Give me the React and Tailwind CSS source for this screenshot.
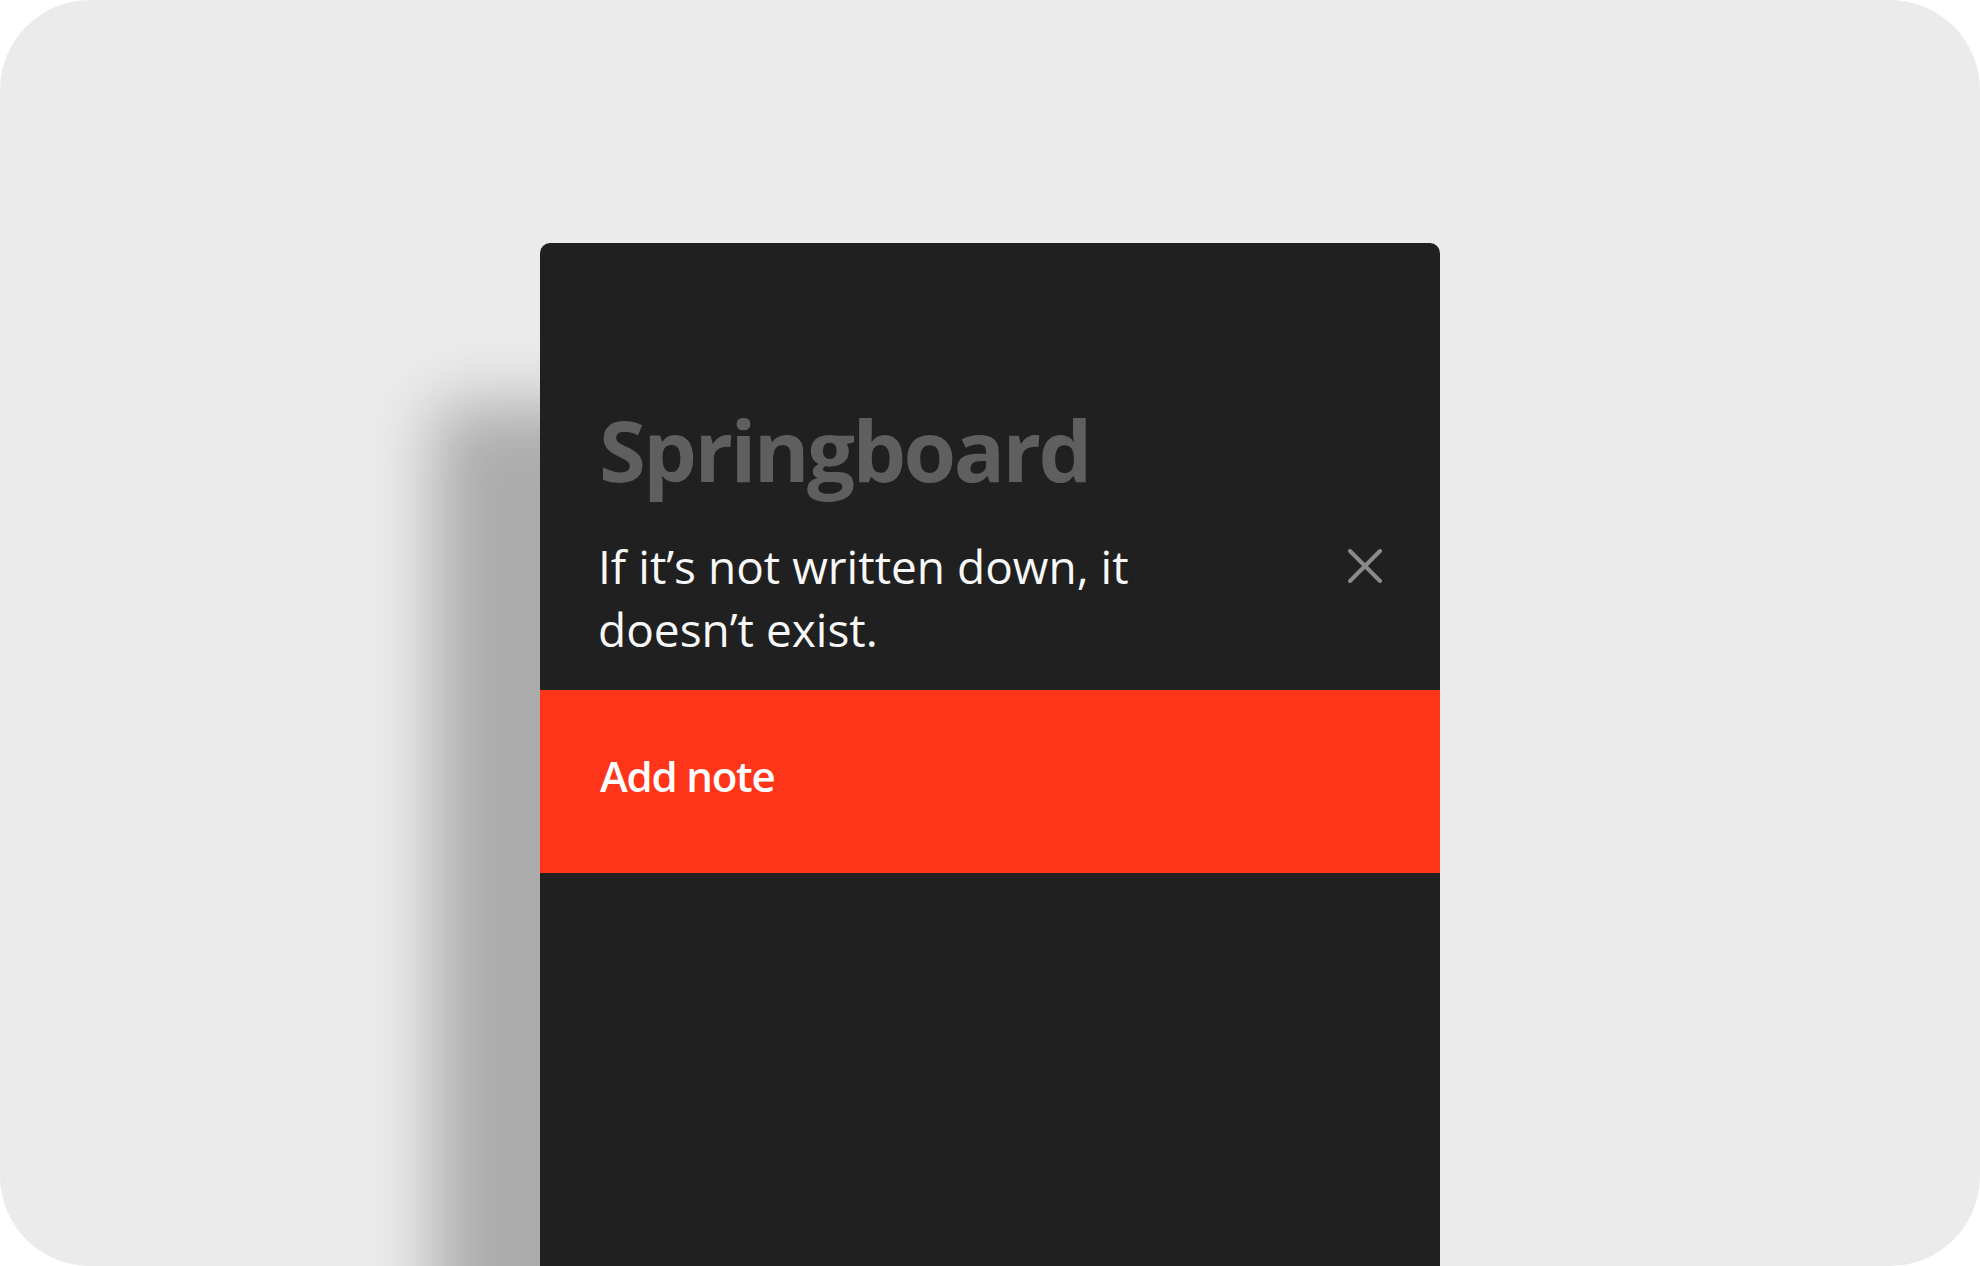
import React from "react";

function CloseIcon() {
  return (
    <svg width="34" height="34" viewBox="0 0 34 34" fill="none" aria-hidden="true">
      <path d="M2 2L32 32M32 2L2 32" stroke="#8a8a8a" strokeWidth="4" strokeLinecap="round" />
    </svg>
  );
}

export default function App() {
  return (
    <div className="w-full h-[1266px] bg-white">
      <div className="h-full w-full rounded-[90px] bg-[#ebebeb] overflow-hidden flex flex-col items-center pt-[243px] font-['Open_Sans','Noto_Sans',sans-serif]">
        <div className="w-[900px] flex-1 rounded-t-[10px] bg-[#202020] shadow-[-105px_162px_65px_rgba(0,0,0,0.27)] flex flex-col">
          {/* Title */}
          <div className="pt-[164px] pl-[59px]">
            <h1 className="text-[85px] leading-none font-bold text-[#5f5f5f] tracking-[-2.6px]">Springboard</h1>
          </div>

          {/* Quote + close */}
          <div className="flex items-start justify-between pl-[58px] pr-[58px] mt-[43px]">
            <p className="w-[600px] text-[46px] leading-[63px] text-[#f7f7f7]">
              If it’s not written down, it doesn’t exist.
            </p>
            <button className="mt-[14px]" aria-label="Close">
              <CloseIcon />
            </button>
          </div>

          {/* Action bar */}
          <div className="mt-[29px] h-[183px] bg-[#ff3519] flex items-center pl-[60px] pb-[11px]">
            <span className="text-[42px] leading-none font-semibold text-white tracking-[-1.2px]">Add note</span>
          </div>
        </div>
      </div>
    </div>
  );
}
